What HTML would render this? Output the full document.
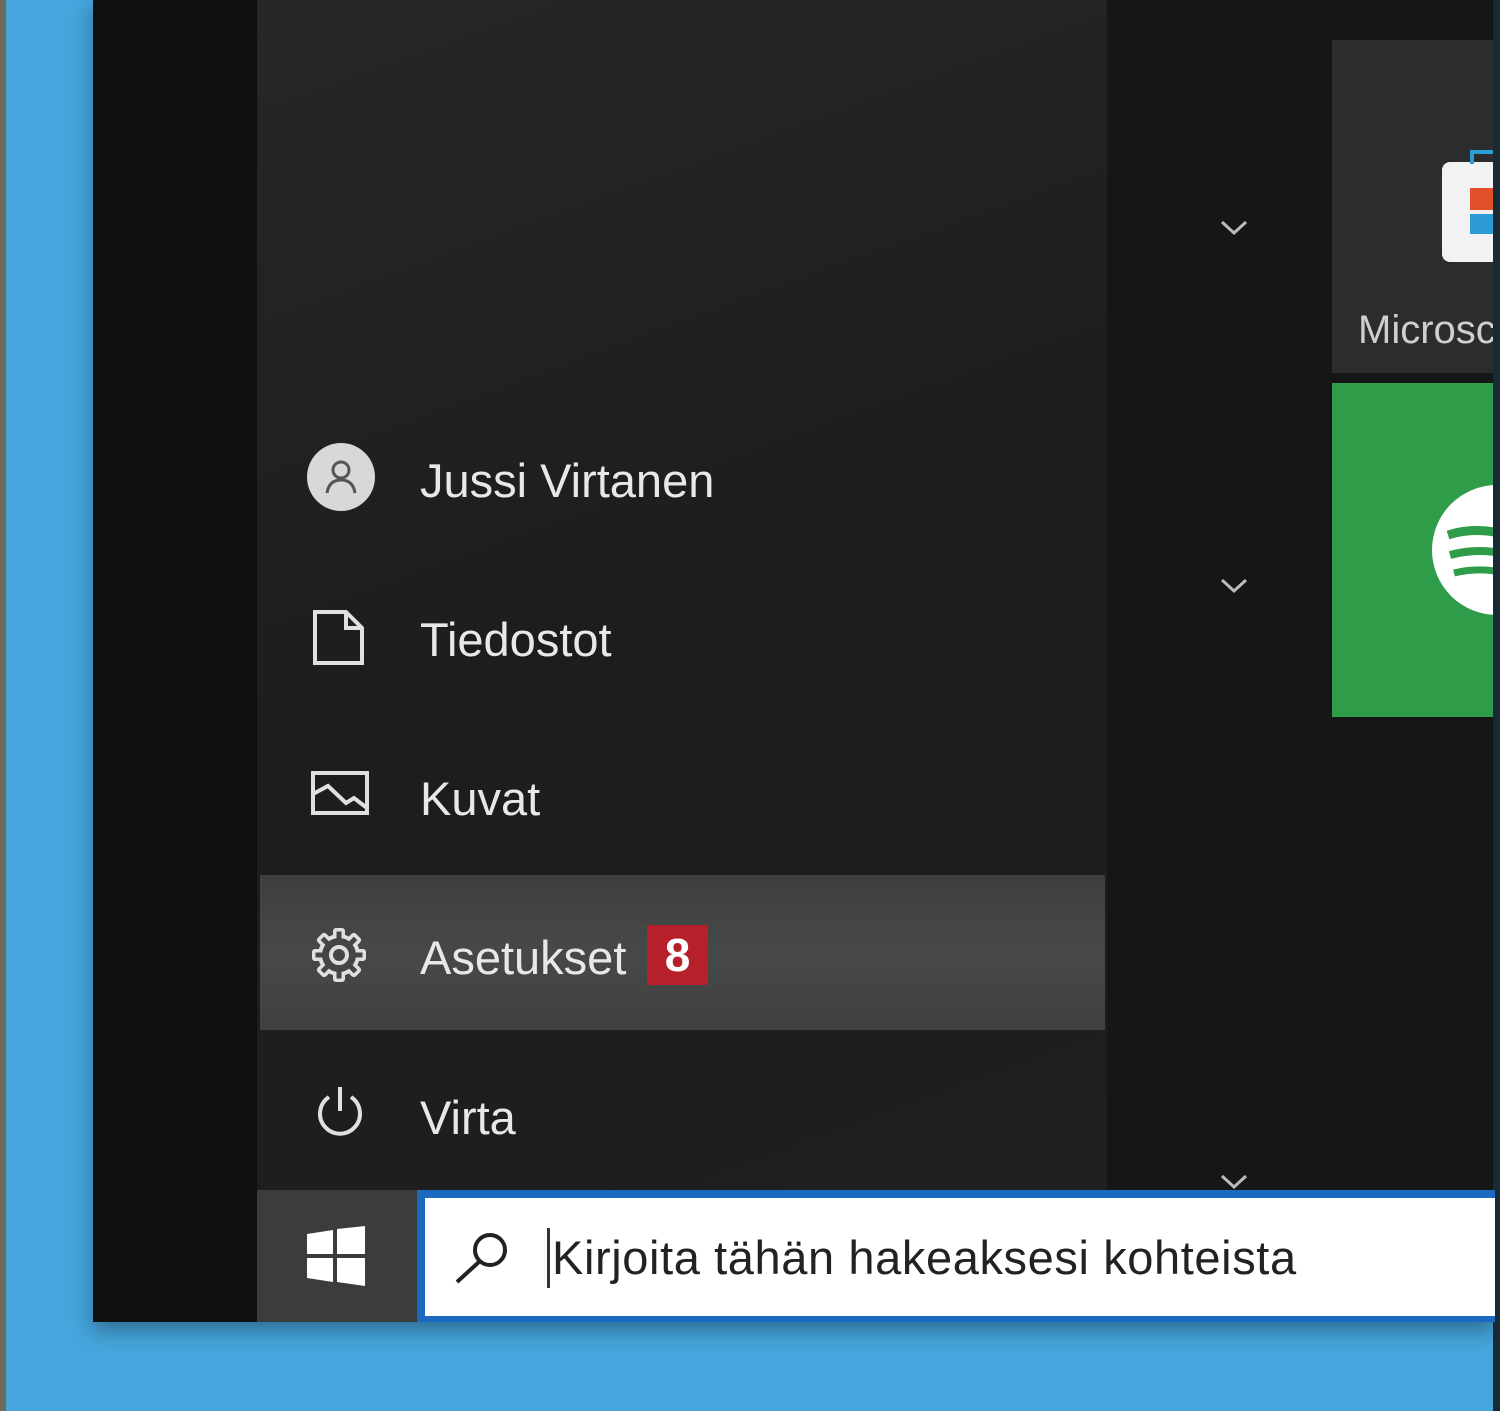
<!DOCTYPE html>
<html><head><meta charset="utf-8"><style>
*{margin:0;padding:0;box-sizing:border-box}
body{width:1500px;height:1411px;background:#45a5dc;position:relative;overflow:hidden;font-family:"Liberation Sans",sans-serif}
.abs{position:absolute}
.item{position:absolute;left:420px;color:#e8e8e8;font-size:47px;line-height:1}
.chev{position:absolute;left:1220px;width:28px;height:20px}
</style></head><body>
<div class="abs" style="left:0;top:0;width:6px;height:1411px;background:#6d6a5e"></div>
<div class="abs" style="left:93px;top:0;width:1402px;height:1322px;background:#131414;box-shadow:0 8px 20px rgba(0,0,0,0.35)"></div>
<div class="abs" style="left:93px;top:0;width:164px;height:1322px;background:#0d0f10"></div>
<div class="abs" style="left:257px;top:0;width:850px;height:1190px;background:linear-gradient(160deg,#262727 0%,#1c1d1d 50%,#1e1f1f 100%)"></div>
<div class="abs" style="left:1107px;top:0;width:388px;height:1190px;background:#151616"></div>
<!-- tiles -->
<div class="abs" style="left:1332px;top:40px;width:163px;height:333px;background:#2b2c2c"></div>
<div class="abs" style="left:1442px;top:162px;width:53px;height:100px;background:#f2f2f2;border-radius:8px 0 0 8px"></div>
<div class="abs" style="left:1470px;top:188px;width:25px;height:22px;background:#e0512b"></div>
<div class="abs" style="left:1470px;top:214px;width:25px;height:20px;background:#2d9bd6"></div>
<div class="abs" style="left:1470px;top:150px;width:25px;height:14px;border:4px solid #2d9bd6;border-bottom:none;border-right:none"></div>
<div class="abs" style="left:1358px;top:310px;color:#cfcfcf;font-size:40px;line-height:1">Microsc</div>
<div class="abs" style="left:1332px;top:383px;width:163px;height:334px;background:#2f9c4a"></div>
<div class="abs" style="left:1432px;top:485px;width:130px;height:130px;border-radius:50%;background:#fff"></div>
<svg class="abs" style="left:1440px;top:500px" width="55" height="100"><path d="M8 35 Q30 28 55 32" stroke="#2f9c4a" stroke-width="9" fill="none"/><path d="M10 55 Q32 49 55 52" stroke="#2f9c4a" stroke-width="8" fill="none"/><path d="M14 73 Q34 68 55 71" stroke="#2f9c4a" stroke-width="7" fill="none"/></svg>
<div class="abs" style="left:1493px;top:0;width:7px;height:1411px;background:#1a2a35"></div>
<!-- chevrons -->
<svg class="chev" style="top:218px"><path d="M2 4 L14 15 L26 4" stroke="#bbb" stroke-width="3" fill="none"/></svg>
<svg class="chev" style="top:576px"><path d="M2 4 L14 15 L26 4" stroke="#bbb" stroke-width="3" fill="none"/></svg>
<svg class="chev" style="top:1172px"><path d="M2 4 L14 15 L26 4" stroke="#bbb" stroke-width="3" fill="none"/></svg>
<!-- highlight -->
<div class="abs" style="left:260px;top:875px;width:845px;height:155px;background:linear-gradient(180deg,#3d3f3f,#474949 50%,#3f4141)"></div>
<!-- icons -->
<div class="abs" style="left:307px;top:443px;width:68px;height:68px;border-radius:50%;background:#d8d8d8"></div>
<svg class="abs" style="left:307px;top:443px" width="68" height="68"><circle cx="34" cy="27" r="8" stroke="#555" stroke-width="3" fill="none"/><path d="M20 50 Q22 37 34 37 Q46 37 48 50" stroke="#555" stroke-width="3" fill="none"/></svg>
<svg class="abs" style="left:312px;top:610px" width="56" height="56"><path d="M3 2 H34 L50 18 V53 H3 Z M34 2 V18 H50" stroke="#e0e0e0" stroke-width="4" fill="none"/></svg>
<svg class="abs" style="left:310px;top:770px" width="60" height="48"><rect x="3" y="3" width="54" height="40" stroke="#e0e0e0" stroke-width="4" fill="none"/><path d="M3 24 L18 16 L36 33 L44 28 L57 38" stroke="#e0e0e0" stroke-width="4" fill="none"/></svg>
<svg class="abs" style="left:308px;top:925px" width="62" height="60"><g fill="#e0e0e0" transform="translate(31 30)"><rect x="-6" y="-27" width="12" height="54" rx="3"/><rect x="-6" y="-27" width="12" height="54" rx="3" transform="rotate(45)"/><rect x="-6" y="-27" width="12" height="54" rx="3" transform="rotate(90)"/><rect x="-6" y="-27" width="12" height="54" rx="3" transform="rotate(135)"/><circle r="21"/></g><g fill="#444646" transform="translate(31 30)"><rect x="-2.5" y="-23.5" width="5" height="47" transform="rotate(0)"/><rect x="-2.5" y="-23.5" width="5" height="47" transform="rotate(45)"/><rect x="-2.5" y="-23.5" width="5" height="47" transform="rotate(90)"/><rect x="-2.5" y="-23.5" width="5" height="47" transform="rotate(135)"/><circle r="17"/></g><circle cx="31" cy="30" r="8" stroke="#e0e0e0" stroke-width="4" fill="none"/></svg>
<svg class="abs" style="left:312px;top:1085px" width="56" height="56"><path d="M17 12 A20 20 0 1 0 39 12" stroke="#e0e0e0" stroke-width="4" fill="none"/><path d="M28 2 V26" stroke="#e0e0e0" stroke-width="4"/></svg>
<!-- text -->
<div class="item" style="top:457px">Jussi Virtanen</div>
<div class="item" style="top:616px">Tiedostot</div>
<div class="item" style="top:775px">Kuvat</div>
<div class="item" style="top:934px">Asetukset</div>
<div class="abs" style="left:647px;top:925px;width:61px;height:60px;background:#b5202a;color:#fff;font-weight:bold;font-size:46px;text-align:center;line-height:60px">8</div>
<div class="item" style="top:1094px">Virta</div>
<!-- taskbar -->
<div class="abs" style="left:257px;top:1190px;width:1238px;height:132px;background:#1d1e1e"></div>
<div class="abs" style="left:257px;top:1190px;width:160px;height:132px;background:#3b3c3c"></div>
<svg class="abs" style="left:305px;top:1226px" width="62" height="60"><path d="M2 8 L28 4 V28 H2 Z M32 3 L60 0 V28 H32 Z M2 32 H28 V56 L2 52 Z M32 32 H60 V60 L32 56 Z" fill="#fff"/></svg>
<div class="abs" style="left:417px;top:1190px;width:1078px;height:132px;background:#1c6ac0"></div>
<div class="abs" style="left:425px;top:1198px;width:1070px;height:118px;background:#fff"></div>
<svg class="abs" style="left:452px;top:1226px" width="64" height="60"><circle cx="38" cy="24" r="15" stroke="#222" stroke-width="4" fill="none"/><path d="M28 35 L5 56" stroke="#222" stroke-width="4"/></svg>
<div class="abs" style="left:547px;top:1228px;width:3px;height:60px;background:#333"></div>
<div class="abs" style="left:552px;top:1234px;color:#222;font-size:47px;line-height:1;letter-spacing:0.6px">Kirjoita tähän hakeaksesi kohteista</div>
</body></html>
